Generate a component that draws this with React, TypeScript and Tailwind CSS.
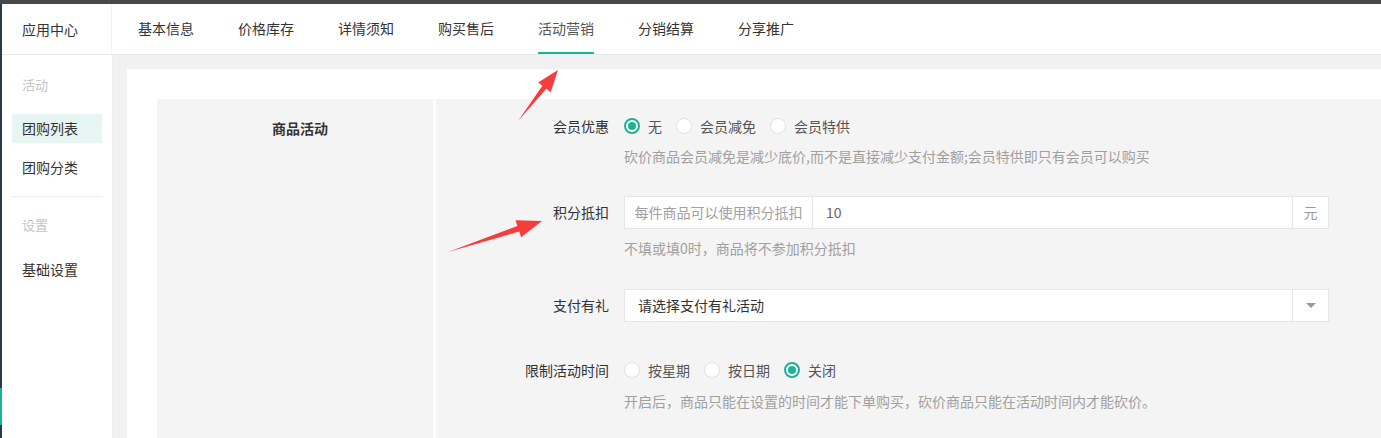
import React from 'react';

const font = { fontFamily: '"Noto Sans CJK SC", "Noto Sans", sans-serif' };

const tabs = ['基本信息', '价格库存', '详情须知', '购买售后', '活动营销', '分销结算', '分享推广'];

function Radio({ checked, label }: { checked?: boolean; label: string }) {
  return (
    <label className="flex items-center mr-[14px]">
      {checked ? (
        <span className="w-4 h-4 rounded-full border-2 border-[#1ab394] bg-white flex items-center justify-center">
          <span className="w-2 h-2 rounded-full bg-[#1ab394]" />
        </span>
      ) : (
        <span className="w-4 h-4 rounded-full border border-[#e2e2e2] bg-white" />
      )}
      <span className="ml-2 text-[14px] text-[#555]">{label}</span>
    </label>
  );
}

function FormLabel({ children }: { children: React.ReactNode }) {
  return <div className="w-[173px] shrink-0 text-right text-[14px] text-[#333] mr-[15px]">{children}</div>;
}

function Help({ children, className = '' }: { children: React.ReactNode; className?: string }) {
  return <div className={`ml-[188px] text-[14px] leading-5 text-[#a0a0a0] whitespace-nowrap ${className}`}>{children}</div>;
}

export default function App() {
  return (
    <div className="relative w-[1381px] h-[438px] overflow-hidden bg-[#f1f1f1]" style={font}>
      {/* top dark bar */}
      <div className="h-[4px] bg-[#48484c]" />
      <div className="flex h-[434px]">
        {/* left dark edge */}
        <div className="w-[2px] shrink-0 bg-[#2c3b48] flex flex-col">
          <div className="h-[384px]" />
          <div className="h-[37px] bg-[#1ab394]" />
        </div>
        <div className="flex-1 flex flex-col min-w-0">
          {/* header */}
          <div className="flex h-[51px] bg-white border-b border-[#e9e9e9] shrink-0">
            <div className="w-[110px] shrink-0 border-r border-[#f3f3f3] flex items-center pl-5 text-[14px] text-[#333]">
              应用中心
            </div>
            <div className="flex pl-[26px]">
              {tabs.map((t) => (
                <div
                  key={t}
                  className={`h-[50px] mr-[44px] flex items-center text-[14px] border-b-2 ${
                    t === '活动营销' ? 'border-[#1ab394] text-[#555]' : 'border-transparent text-[#333]'
                  }`}
                >
                  {t}
                </div>
              ))}
            </div>
          </div>
          <div className="flex flex-1 min-h-0">
            {/* sidebar */}
            <div className="w-[111px] shrink-0 bg-white border-r border-[#eeeeee] px-[10px] pt-5">
              <div className="pl-[10px] text-[13px] leading-5 text-[#c4c4c4]">活动</div>
              <div className="mt-[19px] h-[29px] bg-[#e8f6f3] pl-[10px] flex items-center text-[14px] text-[#333]">团购列表</div>
              <div className="mt-[10px] h-[29px] pl-[10px] flex items-center text-[14px] text-[#333]">团购分类</div>
              <div className="mt-[14px] border-t border-[#eeeeee]" />
              <div className="mt-[18px] pl-[10px] text-[13px] leading-5 text-[#c4c4c4]">设置</div>
              <div className="mt-[20px] h-[29px] pl-[10px] flex items-center text-[14px] text-[#333]">基础设置</div>
            </div>
            {/* main */}
            <div className="flex-1 min-w-0 pl-[14px] pt-[14px]">
              <div className="bg-white h-full pl-[30px] pt-[30px]">
                <div className="flex h-full">
                  <div className="w-[276px] shrink-0 bg-[#f4f4f4] pt-[19px] pl-[10px] text-center text-[14px] font-bold text-[#333]">
                    商品活动
                  </div>
                  <div className="w-[3px] shrink-0" />
                  <div className="flex-1 bg-[#f4f4f4] pt-[17px]">
                    <div className="flex items-center h-5">
                      <FormLabel>会员优惠</FormLabel>
                      <Radio checked label="无" />
                      <Radio label="会员减免" />
                      <Radio label="会员特供" />
                    </div>
                    <Help className="mt-[10px]">砍价商品会员减免是减少底价,而不是直接减少支付金额;会员特供即只有会员可以购买</Help>

                    <div className="flex items-center mt-[30px]">
                      <FormLabel>积分抵扣</FormLabel>
                      <div className="w-[705px] h-[33px] flex bg-white border border-[#e6e6e6] text-[14px]">
                        <div className="w-[188px] shrink-0 border-r border-[#e6e6e6] flex items-center justify-center text-[#a0a0a0]">
                          每件商品可以使用积分抵扣
                        </div>
                        <div className="flex-1 flex items-center pl-[13px] text-[#666]">10</div>
                        <div className="w-[36px] shrink-0 border-l border-[#e6e6e6] flex items-center justify-center text-[#999]">元</div>
                      </div>
                    </div>
                    <Help className="mt-[9px]">不填或填0时，商品将不参加积分抵扣</Help>

                    <div className="flex items-center mt-[31px]">
                      <FormLabel>支付有礼</FormLabel>
                      <div className="w-[705px] h-[33px] flex bg-white border border-[#e6e6e6] text-[14px]">
                        <div className="flex-1 flex items-center pl-[13px] text-[#333]">请选择支付有礼活动</div>
                        <div className="w-[36px] shrink-0 border-l border-[#e6e6e6] flex items-center justify-center">
                          <svg width="10" height="6" viewBox="0 0 10 6">
                            <path d="M0 0 L10 0 L5 5 Z" fill="#999" />
                          </svg>
                        </div>
                      </div>
                    </div>

                    <div className="flex items-center h-5 mt-[38px]">
                      <FormLabel>限制活动时间</FormLabel>
                      <Radio label="按星期" />
                      <Radio label="按日期" />
                      <Radio checked label="关闭" />
                    </div>
                    <Help className="mt-[11px]">开启后，商品只能在设置的时间才能下单购买，砍价商品只能在活动时间内才能砍价。</Help>
                  </div>
                </div>
              </div>
            </div>
          </div>
        </div>
      </div>

      {/* red annotation arrows */}
      <svg className="absolute left-0 top-0 pointer-events-none" width="1381" height="438">
        <polygon
          points="518,121 542.4,85.8 538.1,82.4 558,70 550.7,92.2 546.4,88.8"
          fill="#f63c3c"
        />
        <polygon
          points="448,252 517.4,225.9 515.5,220.3 542,221 521.1,237.3 519.2,231.6"
          fill="#f63c3c"
        />
      </svg>
    </div>
  );
}
